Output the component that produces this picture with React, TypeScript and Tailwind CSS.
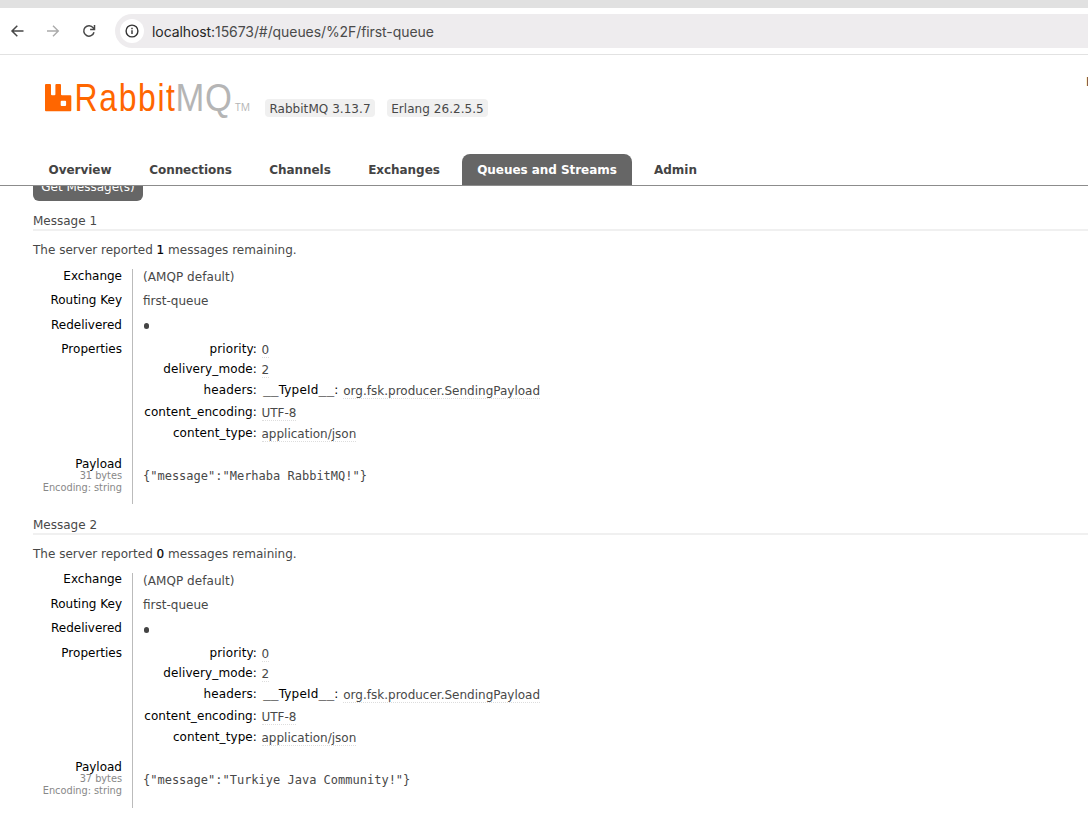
import type { ReactNode } from "react";

const tabs = [
  { label: "Overview", box: "w-[94px]" },
  { label: "Connections", box: "w-[113px]" },
  { label: "Channels", box: "w-[92px]" },
  { label: "Exchanges", box: "w-[102px]" },
  { label: "Queues and Streams", box: "w-[170px]", active: true },
  { label: "Admin", box: "w-[73px]" },
];

const messages = [
  { index: 1, remaining: 1, bytes: 31, payload: '{"message":"Merhaba RabbitMQ!"}' },
  { index: 2, remaining: 0, bytes: 37, payload: '{"message":"Turkiye Java Community!"}' },
];

function BrowserBar() {
  return (
    <div className="flex h-[47px] items-center border-b-[1px] border-[#e2e2e2] bg-white">
      <div className="flex w-[115px] shrink-0 items-center gap-[20px] pl-[9px]">
        <svg width="16" height="16" viewBox="0 0 16 16" fill="none" stroke="#474747" strokeWidth="1.5">
          <path d="M14.5 8H3.4M8.3 2.7 3 8 8.3 13.3" />
        </svg>
        <svg width="16" height="16" viewBox="0 0 16 16" fill="none" stroke="#ababab" strokeWidth="1.4">
          <path d="M2 8h11M8 2.7 13.3 8 8 13.3" />
        </svg>
        <svg width="16" height="16" viewBox="0 0 16 16" fill="none" stroke="#474747" strokeWidth="1.5">
          <path d="M13 9.2A5.2 5.2 0 1 1 12.2 4.9L13.4 6.2M13.5 2v4.4H9.1" />
        </svg>
      </div>
      <div className="flex h-[34px] flex-1 items-center rounded-l-full bg-[#eeecee] pl-[5px]">
        <div className="flex size-6 items-center justify-center rounded-full bg-white">
          <svg width="14" height="14" viewBox="0 0 14 14" fill="none" stroke="#333" strokeWidth="1.4">
            <circle cx="7" cy="7" r="5.9" />
            <path d="M7 6.3v3.7M7 3.8v1.4" />
          </svg>
        </div>
        <span className="ml-2 font-['Inter',sans-serif] text-[14px] tracking-[-0.08px] text-[#4a4a4a]">
          <span className="text-[#262626]">localhost:</span>15673/#/queues/%2F/first-queue
        </span>
      </div>
    </div>
  );
}

function Logo() {
  return (
    <svg width="208" height="36" viewBox="0 0 208 36" className="shrink-0 overflow-visible">
      <path
        fill="#ff6600"
        fillRule="evenodd"
        d="M1 4h4a1 1 0 0 1 1 1v9.3a1 1 0 0 0 1 1h2.4a1 1 0 0 0 1-1V5a1 1 0 0 1 1-1h3.6a1 1 0 0 1 1 1v9.3a1 1 0 0 0 1 1H25.3a1 1 0 0 1 1 1V30.2a1 1 0 0 1-1 1H1a1 1 0 0 1-1-1V5a1 1 0 0 1 1-1ZM16.7 20.7a1 1 0 0 0-1 1v3.2a1 1 0 0 0 1 1h3.4a1 1 0 0 0 1-1v-3.2a1 1 0 0 0-1-1Z"
      />
      <text x="29.6" y="31.2" fontSize="39" textLength="102" lengthAdjust="spacingAndGlyphs" fill="#ff6600" className="font-['Liberation_Sans',sans-serif] tracking-[2px]">
        Rabbit
      </text>
      <text x="130.4" y="31.2" fontSize="39" textLength="57.5" lengthAdjust="spacingAndGlyphs" fill="#b5b5b5" className="font-['Liberation_Sans',sans-serif] tracking-[1px]">
        MQ
      </text>
      <text x="190" y="31.2" fontSize="10" textLength="15" lengthAdjust="spacingAndGlyphs" fill="#b5b5b5" className="font-['Open_Sans',sans-serif]">
        TM
      </text>
    </svg>
  );
}

function Badge({ children, box }: { children: ReactNode; box: string }) {
  return (
    <span className={`flex h-[18px] items-center justify-center whitespace-nowrap rounded-[4px] bg-[#f0f0f0] pt-px tracking-[0.05px] ${box}`}>
      {children}
    </span>
  );
}

function Label({ children }: { children: ReactNode }) {
  return <div className="h-[24.5px] leading-[14px] text-black">{children}</div>;
}

function Property({ name, children, box }: { name: string; children: ReactNode; box: string }) {
  return (
    <div className={`flex leading-[15px] ${box}`}>
      <div className="w-[124px] text-right tracking-[0.1px] text-black">{name}:</div>
      <div className="ml-[4.5px] pt-px">{children}</div>
    </div>
  );
}

function Value({ children }: { children: ReactNode }) {
  return <span className="inline-block border-b border-dotted border-[#ddd] leading-[14px]">{children}</span>;
}

function Underscores() {
  return <span className="font-['DejaVu_Sans_Mono',monospace] text-[13px] leading-none">__</span>;
}

function Message({ index, remaining, bytes, payload }: (typeof messages)[number]) {
  return (
    <section className="h-[303.7px] pl-[33px]">
      <h3 className="h-[18px] border-b-2 border-[#f0f0f0] leading-[16px]">Message {index}</h3>
      <p className="mt-[11.4px] h-[26.5px] leading-[16px] tracking-[0.01px]">
        The server reported <b className="font-medium text-black [-webkit-text-stroke:0.2px]">{remaining}</b> messages remaining.
      </p>
      <div className="flex h-[235.2px]">
        <div className="w-[100px] border-r border-[#bbb] pr-[10px] text-right">
          <div className="-mt-[0.3px]">
            <Label>Exchange</Label>
            <Label>Routing Key</Label>
            <Label>Redelivered</Label>
            <Label>Properties</Label>
          </div>
          <div className="mt-[90px] leading-[14px] text-black">Payload</div>
          <div className="-mt-px text-[9.8px] leading-[12px] tracking-[-0.03px] text-[#888]">
            {bytes} bytes
            <br />
            Encoding: string
          </div>
        </div>
        <div className="pl-[10px]">
          <div className="h-[24.5px] pt-px leading-[14px] tracking-[0.06px]">(AMQP default)</div>
          <div className="h-[24.5px] pt-px leading-[14px]">first-queue</div>
          <div className="flex h-[24px] pt-[5px]">
            <i className="ml-[0.7px] mt-[0.6px] size-[5.5px] rounded-full bg-[#444]" />
          </div>
          <div className="-ml-[10px]">
            <Property name="priority" box="h-[20.5px]"><Value>0</Value></Property>
            <Property name="delivery_mode" box="h-[20.5px]"><Value>2</Value></Property>
            <Property name="headers" box="h-[22.5px]">
              <span className="-mt-px ml-[1.5px] flex gap-[5px]">
                <span className="text-black"><Underscores /><span className="tracking-[0.2px]">TypeId</span><Underscores />:</span>
                <span className="pt-px"><Value>org.fsk.producer.SendingPayload</Value></span>
              </span>
            </Property>
            <Property name="content_encoding" box="h-[20.5px]"><Value>UTF-8</Value></Property>
            <Property name="content_type" box="h-[20.5px]"><Value>application/json</Value></Property>
          </div>
          <pre className="mt-[21.6px] font-['DejaVu_Sans_Mono',monospace] text-[12px] leading-[16px] tracking-normal">{payload}</pre>
        </div>
      </div>
    </section>
  );
}

export default function App() {
  return (
    <div className="h-[818px] w-[1088px] overflow-hidden bg-white font-['DejaVu_Sans',Verdana,sans-serif] text-[12px] text-[#484848]">
      <div className="h-2 bg-[#e1e1e1]" />
      <BrowserBar />
      <header className="flex h-[98px] pl-[45px] pt-[25px]">
        <Logo />
        <div className="ml-3 mt-[19px] flex gap-3">
          <Badge box="w-[110px]">RabbitMQ 3.13.7</Badge>
          <Badge box="w-[101px]">Erlang 26.2.5.5</Badge>
        </div>
        <div className="ml-auto mt-[-7px] w-[3px] overflow-hidden whitespace-nowrap pl-px font-bold">Refreshed</div>
      </header>
      <nav className="flex h-[33px] items-end gap-[7px] border-b border-[#8c8c8c] pl-[33px] font-bold">
        {tabs.map((tab) => (
          <a
            key={tab.label}
            className={`flex h-[31px] items-center justify-center whitespace-nowrap rounded-t-[8px] tracking-[-0.05px] ${tab.box} ${
              tab.active ? "bg-[#666] text-white" : "text-[#444]"
            }`}
          >
            {tab.label}
          </a>
        ))}
      </nav>
      <main>
        <div className="flex h-[27px] pl-[33px]">
          <div className="flex h-[15px] w-[110px] items-end justify-center overflow-hidden rounded-b-[6px] bg-[#666] pb-[6px] leading-[16px] text-white">
            Get Message(s)
          </div>
        </div>
        {messages.map((message) => (
          <Message key={message.index} {...message} />
        ))}
      </main>
    </div>
  );
}
